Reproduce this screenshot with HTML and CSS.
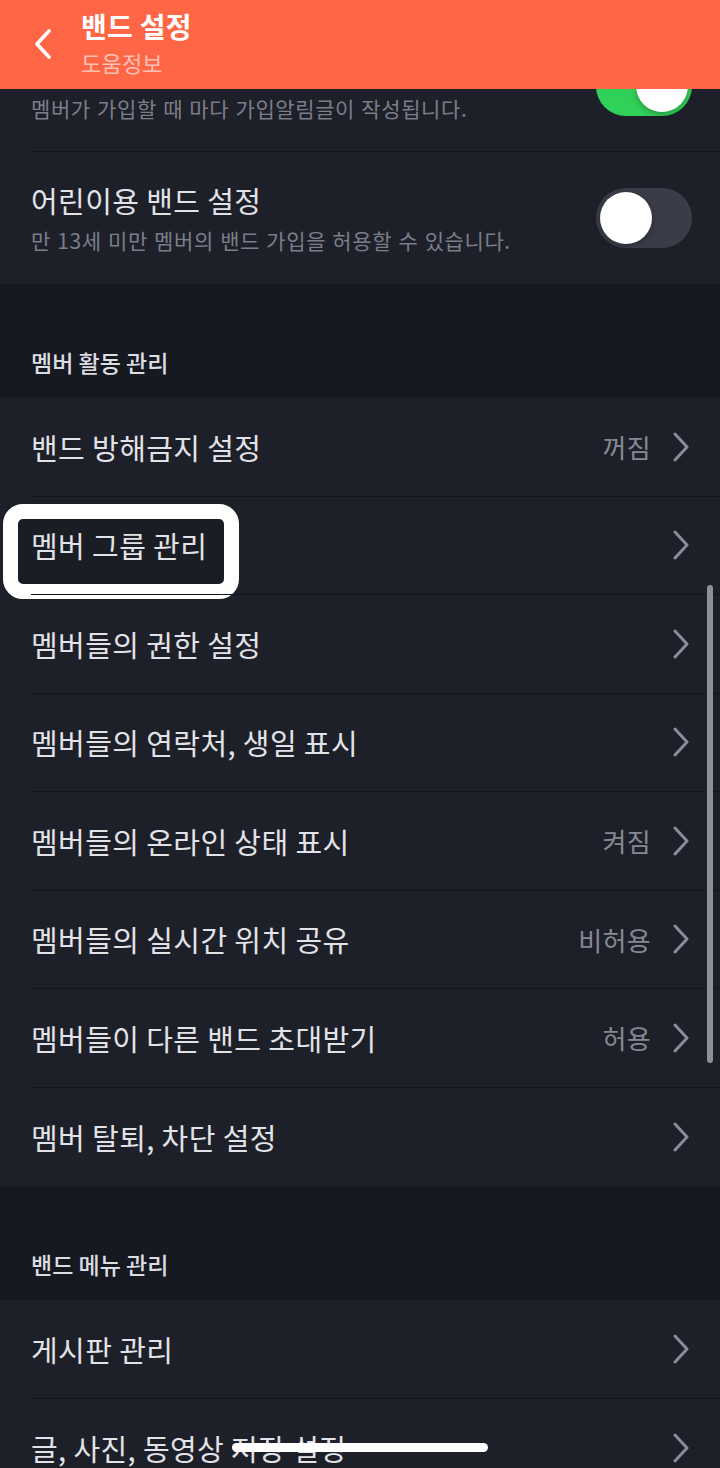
FILE: index.html
```html
<!DOCTYPE html>
<html>
<head>
  <meta charset="UTF-8">
  <title>밴드 설정</title>
  <link rel="stylesheet" href="styles.css">
</head>
<body>
  <div class="app-bar">
    <svg class="back" width="18" height="32" viewBox="0 0 18 32">
      <path d="M15 3 L3 16 L15 29" fill="none" stroke="#ffffff" stroke-width="3.6" stroke-linecap="round" stroke-linejoin="round"/>
    </svg>
    <div class="app-title">
      <div class="title">밴드 설정</div>
      <div class="subtitle">도움정보</div>
    </div>
  </div>

  <div class="content">
    <div class="group">
      <div class="row toggle-row">
        <div class="row-inner">
          <div class="texts">
            <!-- title of this row is scrolled under the app bar -->
            <div class="desc under-bar">멤버가 가입할 때 마다 가입알림글이 작성됩니다.</div>
          </div>
          <div class="switch on"><div class="knob"></div></div>
        </div>
      </div>
      <div class="row toggle-row">
        <div class="row-inner">
          <div class="texts">
            <div class="label">어린이용 밴드 설정</div>
            <div class="desc">만 13세 미만 멤버의 밴드 가입을 허용할 수 있습니다.</div>
          </div>
          <div class="switch"><div class="knob"></div></div>
        </div>
      </div>
    </div>

    <div class="group-header">멤버 활동 관리</div>
    <div class="group">
      <div class="row">
        <div class="row-inner">
          <div class="label">밴드 방해금지 설정</div>
          <div class="value">꺼짐</div>
          <svg class="chevron" width="18" height="30" viewBox="0 0 18 30"><path d="M3 2 L15 15 L3 28" /></svg>
        </div>
      </div>
      <div class="row">
        <div class="highlight"></div>
        <div class="row-inner">
          <div class="label">멤버 그룹 관리</div>
          <svg class="chevron" width="18" height="30" viewBox="0 0 18 30"><path d="M3 2 L15 15 L3 28" /></svg>
        </div>
      </div>
      <div class="row">
        <div class="row-inner">
          <div class="label">멤버들의 권한 설정</div>
          <svg class="chevron" width="18" height="30" viewBox="0 0 18 30"><path d="M3 2 L15 15 L3 28" /></svg>
        </div>
      </div>
      <div class="row">
        <div class="row-inner">
          <div class="label">멤버들의 연락처, 생일 표시</div>
          <svg class="chevron" width="18" height="30" viewBox="0 0 18 30"><path d="M3 2 L15 15 L3 28" /></svg>
        </div>
      </div>
      <div class="row">
        <div class="row-inner">
          <div class="label">멤버들의 온라인 상태 표시</div>
          <div class="value">켜짐</div>
          <svg class="chevron" width="18" height="30" viewBox="0 0 18 30"><path d="M3 2 L15 15 L3 28" /></svg>
        </div>
      </div>
      <div class="row">
        <div class="row-inner">
          <div class="label">멤버들의 실시간 위치 공유</div>
          <div class="value">비허용</div>
          <svg class="chevron" width="18" height="30" viewBox="0 0 18 30"><path d="M3 2 L15 15 L3 28" /></svg>
        </div>
      </div>
      <div class="row">
        <div class="row-inner">
          <div class="label">멤버들이 다른 밴드 초대받기</div>
          <div class="value">허용</div>
          <svg class="chevron" width="18" height="30" viewBox="0 0 18 30"><path d="M3 2 L15 15 L3 28" /></svg>
        </div>
      </div>
      <div class="row">
        <div class="row-inner">
          <div class="label">멤버 탈퇴, 차단 설정</div>
          <svg class="chevron" width="18" height="30" viewBox="0 0 18 30"><path d="M3 2 L15 15 L3 28" /></svg>
        </div>
      </div>
    </div>

    <div class="group-header">밴드 메뉴 관리</div>
    <div class="group">
      <div class="row">
        <div class="row-inner">
          <div class="label">게시판 관리</div>
          <svg class="chevron" width="18" height="30" viewBox="0 0 18 30"><path d="M3 2 L15 15 L3 28" /></svg>
        </div>
      </div>
      <div class="row">
        <div class="row-inner">
          <div class="label">글, 사진, 동영상 저장 설정</div>
          <svg class="chevron" width="18" height="30" viewBox="0 0 18 30"><path d="M3 2 L15 15 L3 28" /></svg>
        </div>
      </div>
    </div>
  </div>

  <div class="scrollbar"></div>
  <div class="home-indicator"></div>
</body>
</html>
```

FILE: styles.css
```css
body {
  margin: 0;
  width: 720px;
  height: 1468px;
  overflow: hidden;
  background-color: #161920;
  font-family: "Noto Sans CJK KR", "Noto Sans", sans-serif;
  color: #e2e3e8;
}
.app-bar {
  position: fixed;
  top: 0;
  left: 0;
  right: 0;
  height: 89px;
  background-color: #ff6645;
  display: flex;
  align-items: flex-start;
  z-index: 10;
}
.back {
  margin: 28px 0 0 34px;
}
.app-title {
  margin-left: 29px;
  padding-top: 10px;
}
.title {
  font-size: 28px;
  font-weight: 700;
  line-height: 32px;
  letter-spacing: 0.3px;
  color: #ffffff;
}
.subtitle {
  margin-top: 6px;
  font-size: 22px;
  line-height: 28px;
  letter-spacing: 0.2px;
  color: rgba(255, 255, 255, 0.62);
}
.content {
  padding-top: 20px;
}
.group {
  background-color: #1e2029;
}
.group-header {
  height: 114px;
  box-sizing: border-box;
  padding: 0 31px 21px;
  display: flex;
  align-items: flex-end;
  font-size: 23px;
  font-weight: 500;
  line-height: 30px;
  color: #dcdde3;
}
.row {
  position: relative;
  padding-left: 31px;
}
.row-inner {
  position: relative;
  height: 98.5px;
  box-sizing: border-box;
  display: flex;
  align-items: center;
  padding-right: 30px;
  border-bottom: 1px solid #14161c;
}
.row:last-child .row-inner {
  border-bottom: none;
}
.toggle-row .row-inner {
  height: 132px;
  padding-right: 28px;
}
.texts {
  flex: 1;
}
.label {
  flex: 1;
  font-size: 29px;
  line-height: 36px;
  letter-spacing: 0.4px;
  color: #e2e3e8;
}
.desc {
  margin-top: 8px;
  font-size: 21px;
  line-height: 28px;
  letter-spacing: 0.6px;
  word-spacing: 1px;
  color: #7b7e8a;
}
.desc.under-bar {
  margin-top: 44px;
}
.value {
  font-size: 26px;
  letter-spacing: 0.3px;
  color: #868995;
  margin-right: 21px;
}
.chevron path {
  fill: none;
  stroke: #8a8c99;
  stroke-width: 3;
  stroke-linecap: round;
  stroke-linejoin: round;
}
.switch {
  width: 96px;
  height: 60px;
  border-radius: 30px;
  background-color: #3a3c47;
  position: relative;
  flex-shrink: 0;
}
.switch.on {
  background-color: #30d158;
}
.knob {
  position: absolute;
  top: 4px;
  left: 4px;
  width: 52px;
  height: 52px;
  border-radius: 50%;
  background-color: #ffffff;
  box-shadow: 0 2px 6px rgba(0, 0, 0, 0.3);
}
.switch.on .knob {
  left: 40px;
}
.highlight {
  position: absolute;
  top: 7px;
  left: 3px;
  width: 236px;
  height: 95px;
  box-sizing: border-box;
  border: 15px solid #ffffff;
  border-radius: 20px;
  background-color: #1b1d25;
}
.scrollbar {
  position: fixed;
  left: 707px;
  top: 585px;
  width: 6px;
  height: 478px;
  border-radius: 3px;
  background-color: #8e9097;
}
.home-indicator {
  position: fixed;
  left: 232px;
  top: 1443px;
  width: 256px;
  height: 9px;
  border-radius: 5px;
  background-color: #ffffff;
}
```
